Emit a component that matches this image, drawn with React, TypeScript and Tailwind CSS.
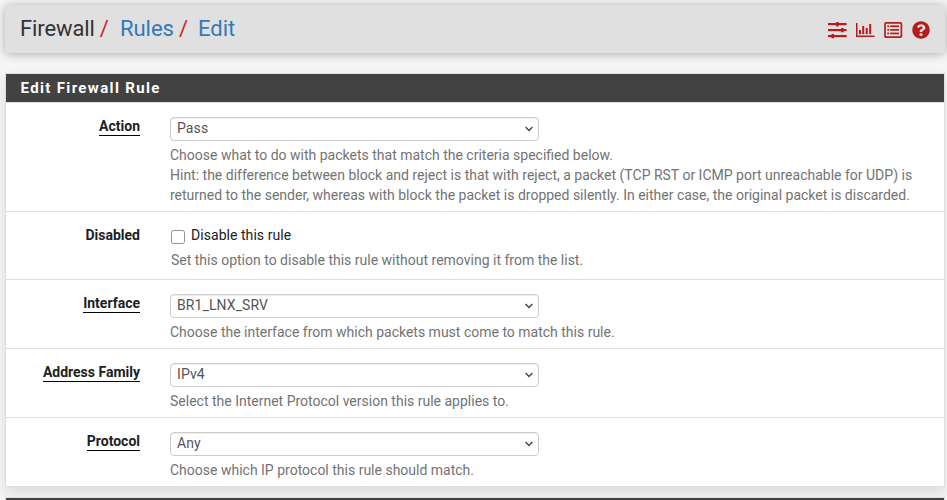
import React from 'react';
import { FaQuestionCircle } from 'react-icons/fa';

function SlidersIcon() {
  return (
    <svg width="20" height="18" viewBox="0 0 20 18" fill="#b71c1c">
      <rect x="1" y="2" width="18.6" height="2.2" />
      <rect x="1" y="8" width="18.6" height="2.2" />
      <rect x="1" y="14" width="18.6" height="2.2" />
      <rect x="9" y="1" width="2.6" height="4.4" rx=".5" />
      <rect x="14" y="6.9" width="2.6" height="4.4" rx=".5" />
      <rect x="4.5" y="12.9" width="2.6" height="4.4" rx=".5" />
    </svg>
  );
}

function ChartIcon() {
  return (
    <svg width="20" height="18" viewBox="0 0 20 18" fill="#b71c1c">
      <rect x="1" y="2" width="1.5" height="14" />
      <rect x="1" y="14.5" width="18.5" height="1.5" />
      <rect x="4" y="9" width="2" height="4.2" />
      <rect x="7.2" y="5" width="2" height="8.2" />
      <rect x="10.7" y="7" width="2" height="6.2" />
      <rect x="14.2" y="3" width="2" height="10.2" />
    </svg>
  );
}

function ListIcon() {
  return (
    <svg width="20" height="18" viewBox="0 0 20 18" fill="#b71c1c">
      <rect x="2" y="1.9" width="16.4" height="14.2" rx="1" fill="none" stroke="#b71c1c" strokeWidth="1.7" />
      {[4.4, 8, 11.6].map((y) => (
        <g key={y}>
          <rect x="4.3" y={y} width="1.9" height="1.7" />
          <rect x="7.2" y={y} width="8.8" height="1.7" />
        </g>
      ))}
    </svg>
  );
}

function Select({ value }: { value: string }) {
  return (
    <div className="flex h-6 w-[369px] items-center justify-between rounded border border-[#ccc] bg-white pr-[5px] pl-[6px] text-[#555] shadow-[inset_0_1px_1px_rgba(0,0,0,0.075)]">
      <span className="-mt-[2px] leading-5 tracking-[0.1px]">{value}</span>
      <svg width="8" height="6" viewBox="0 0 8 6" fill="none" stroke="#444" strokeWidth="1.4">
        <path d="M.6 1 4 4.4 7.4 1" />
      </svg>
    </div>
  );
}

type RowProps = { label: string; plain?: boolean; className: string; children: React.ReactNode };

function Row({ label, plain, className, children }: RowProps) {
  return (
    <div className={`flex border-[#dedede] ${className}`}>
      <div className="w-[134px] shrink-0 pt-[13px] text-right font-bold text-[#212121]">
        <span className={plain ? 'inline-block leading-[18px]' : 'inline-block border-b border-black leading-[17px]'}>{label}</span>
      </div>
      <div className="ml-[30px] pt-[14px]">{children}</div>
    </div>
  );
}

function Help({ children }: { children: React.ReactNode }) {
  return <p className="mt-[4px] leading-5 whitespace-nowrap text-[#737373]">{children}</p>;
}

export default function App() {
  return (
    <div className="h-[500px] overflow-hidden bg-[#f5f5f5] px-[5px] pt-[5px] font-[Roboto,sans-serif] text-[14px] text-[#212121]">
      <header className="mr-[-3px] flex h-12 items-center justify-between rounded-[4px] bg-[#e0e0e0] pr-[15px] pl-[15px] shadow-[0_1px_10px_rgba(0,0,0,0.3)]">
        <nav className="flex text-[22px] leading-6">
          <span className="tracking-[-0.1px] text-[#333]">Firewall</span>
          <span className="ml-[5px] text-[#c62828]">/</span>
          <a className="ml-[11px] text-[#337ab7]">Rules</a>
          <span className="ml-[5px] text-[#c62828]">/</span>
          <a className="ml-[10px] text-[#337ab7]">Edit</a>
        </nav>
        <div className="flex items-center gap-2 pt-px">
          <SlidersIcon />
          <ChartIcon />
          <ListIcon />
          <FaQuestionCircle className="ml-px h-[18px] w-[18px] text-[#b71c1c]" />
        </div>
      </header>
      <section className="mt-5 mr-[-3px] w-[940px] border border-[#dedede] bg-white shadow-[0_6px_12px_rgba(0,0,0,0.1)]">
        <h2 className="flex h-7 items-center bg-[#424242] pl-[14.5px] text-[15px] font-bold tracking-[1.35px] text-white">Edit Firewall Rule</h2>
        <Row label="Action" className="h-[110px] border-y">
          <Select value="Pass" />
          <Help>
            Choose what to do with packets that match the criteria specified below.<br />
            Hint: the difference between block and reject is that with reject, a packet (TCP RST or ICMP port unreachable for UDP) is<br />
            returned to the sender, whereas with block the packet is dropped silently. In either case, the original packet is discarded.
          </Help>
        </Row>
        <Row label="Disabled" plain className="h-[68px] border-b">
          <div className="flex h-5 items-center pl-px">
            <span className="mt-px h-[14px] w-[14px] rounded-[2.5px] border border-[#8f8f9d] bg-white" />
            <span className="-mt-[2px] ml-[6px] tracking-[0.05px]">Disable this rule</span>
          </div>
          <div className="ml-px"><Help>Set this option to disable this rule without removing it from the list.</Help></div>
        </Row>
        <Row label="Interface" className="h-[69px] border-b">
          <Select value="BR1_LNX_SRV" />
          <Help>Choose the interface from which packets must come to match this rule.</Help>
        </Row>
        <Row label="Address Family" className="h-[69px] border-b">
          <Select value="IPv4" />
          <Help>Select the Internet Protocol version this rule applies to.</Help>
        </Row>
        <Row label="Protocol" className="h-[68px]">
          <Select value="Any" />
          <Help>Choose which IP protocol this rule should match.</Help>
        </Row>
      </section>
      <section className="mt-[10px] w-[940px] border border-[#dedede]">
        <div className="h-7 bg-[#424242]" />
      </section>
    </div>
  );
}
